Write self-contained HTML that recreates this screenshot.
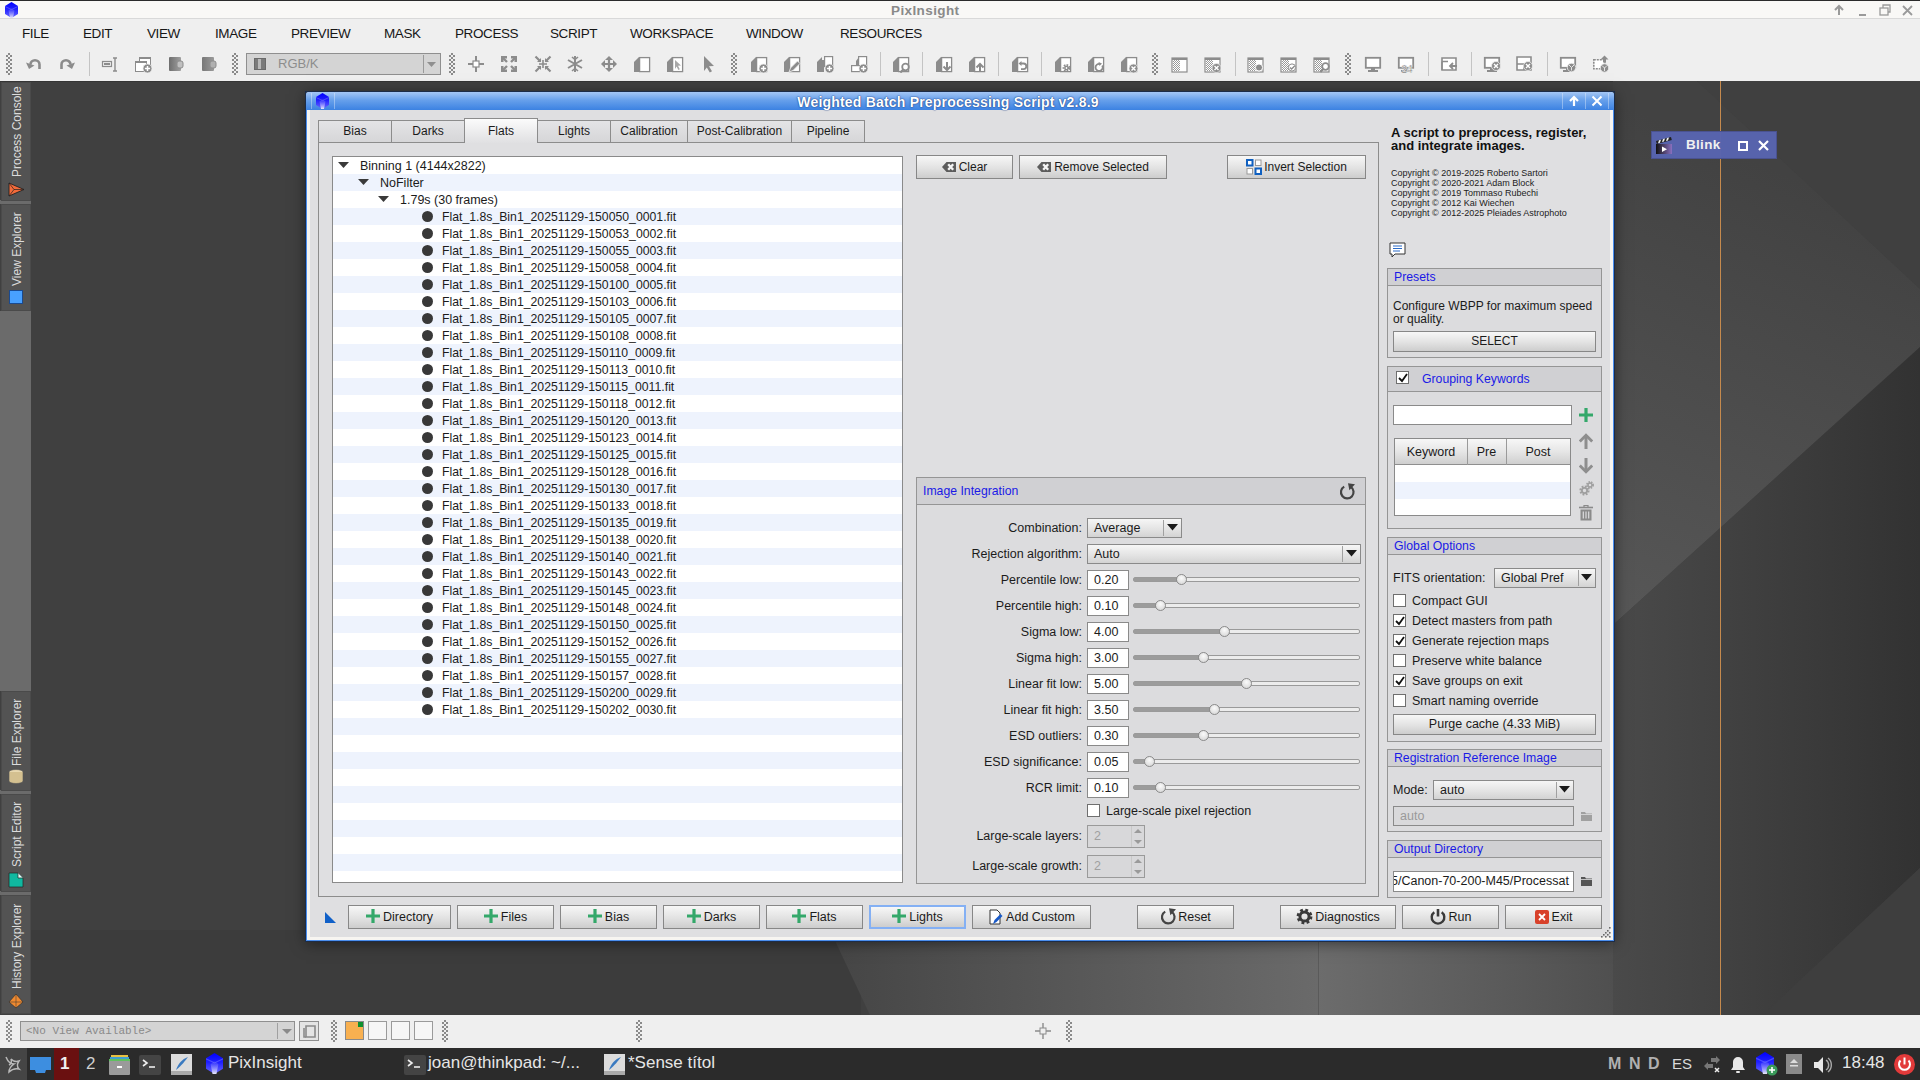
<!DOCTYPE html><html><head><meta charset="utf-8"><style>
*{box-sizing:border-box;margin:0;padding:0}
html,body{width:1920px;height:1080px;overflow:hidden;background:#3d3d3d}
body{position:relative;font-family:"Liberation Sans",sans-serif;font-size:12px;color:#1b1b1b}
div,span,svg{position:absolute}
.t{white-space:nowrap;line-height:14px}
.btn{border:1px solid #878787;background:linear-gradient(#f7f7f7,#e2e2e2 55%,#cdcdcd);text-align:center;line-height:21px;white-space:nowrap;color:#1b1b1b}
.btn span{position:static}
.grp{border:1px solid #959595;background:#dcdcde}
.gh{left:0;right:0;top:0;background:#d0d0d3;border-bottom:1px solid #959595}
.gt{color:#1a1ae6;white-space:nowrap;line-height:14px}
.cb{width:14px;height:14px;border:1px solid #6f6f6f;background:#fff}
.edit{background:#fff;border:1px solid #8a8a8a;line-height:18px;padding-left:6px;white-space:nowrap}
.combo{border:1px solid #8a8a8a;background:linear-gradient(#f6f6f6,#e4e4e4 55%,#d3d3d3);line-height:18px;padding-left:6px;white-space:nowrap}
.tb{background:#efefef}
</style></head><body><div style="left:0px;top:0px;width:1920px;height:1px;background:#2b2b2b"></div>
<div style="left:0px;top:1px;width:1920px;height:17px;background:#f9f8f6"></div>
<div style="left:0px;top:18px;width:1920px;height:1px;background:#d9d9d9"></div>
<div class="t" style="left:891px;top:4px;font-size:13.5px;font-weight:bold;color:#8a8a8a;line-height:14px;letter-spacing:0.4px">PixInsight</div>
<svg style="left:5px;top:2px" width="13" height="16" viewBox="0 0 13 16"><defs><linearGradient id="pl1" x1="0" y1="0" x2="0" y2="1"><stop offset="0" stop-color="#0000ff"/><stop offset="0.45" stop-color="#2020ff"/><stop offset="1" stop-color="#6a6aff"/></linearGradient><linearGradient id="pw1" x1="0" y1="0" x2="0" y2="1"><stop offset="0" stop-color="#5a5aff" stop-opacity="0.2"/><stop offset="1" stop-color="#e8e8fa"/></linearGradient></defs><polygon points="6.5,0 13,4 13,12 6.5,16 0,12 0,4" fill="url(#pl1)"/><polygon points="6.5,6 9.5,8.5 8,16 5,16 3.5,8.5" fill="url(#pw1)"/><polygon points="0,4 6.5,7 6.5,8 0,5" fill="#8080ff" opacity="0.5"/><polygon points="13,4 6.5,7 6.5,8 13,5" fill="#8080ff" opacity="0.5"/></svg>
<svg style="left:1830px;top:3px" width="90" height="14" viewBox="0 0 90 14"><path d="M9 12V3M5 7l4-4 4 4" stroke="#9a9a9a" stroke-width="2" fill="none"/><rect x="29" y="11" width="7" height="2" fill="#9a9a9a"/><rect x="50" y="5" width="8" height="7" fill="none" stroke="#9a9a9a" stroke-width="1.3"/><path d="M53 5V2h7v7h-2" fill="none" stroke="#9a9a9a" stroke-width="1.3"/><path d="M73 3l9 9M82 3l-9 9" stroke="#9a9a9a" stroke-width="1.8"/></svg>
<div style="left:0px;top:19px;width:1920px;height:62px;background:#efefef"></div>
<div class="t" style="left:22px;top:27px;font-size:13.5px;line-height:14px;color:#161616;letter-spacing:-0.4px">FILE</div>
<div class="t" style="left:83px;top:27px;font-size:13.5px;line-height:14px;color:#161616;letter-spacing:-0.4px">EDIT</div>
<div class="t" style="left:147px;top:27px;font-size:13.5px;line-height:14px;color:#161616;letter-spacing:-0.4px">VIEW</div>
<div class="t" style="left:215px;top:27px;font-size:13.5px;line-height:14px;color:#161616;letter-spacing:-0.4px">IMAGE</div>
<div class="t" style="left:291px;top:27px;font-size:13.5px;line-height:14px;color:#161616;letter-spacing:-0.4px">PREVIEW</div>
<div class="t" style="left:384px;top:27px;font-size:13.5px;line-height:14px;color:#161616;letter-spacing:-0.4px">MASK</div>
<div class="t" style="left:455px;top:27px;font-size:13.5px;line-height:14px;color:#161616;letter-spacing:-0.4px">PROCESS</div>
<div class="t" style="left:550px;top:27px;font-size:13.5px;line-height:14px;color:#161616;letter-spacing:-0.4px">SCRIPT</div>
<div class="t" style="left:630px;top:27px;font-size:13.5px;line-height:14px;color:#161616;letter-spacing:-0.4px">WORKSPACE</div>
<div class="t" style="left:746px;top:27px;font-size:13.5px;line-height:14px;color:#161616;letter-spacing:-0.4px">WINDOW</div>
<div class="t" style="left:840px;top:27px;font-size:13.5px;line-height:14px;color:#161616;letter-spacing:-0.4px">RESOURCES</div>
<div style="left:6px;top:53px;width:6px;height:22px;background:repeating-conic-gradient(#8a8a8a 0 25%,transparent 0 50%) 0 0/4px 4px"></div>
<div style="left:232px;top:53px;width:6px;height:22px;background:repeating-conic-gradient(#8a8a8a 0 25%,transparent 0 50%) 0 0/4px 4px"></div>
<div style="left:449px;top:53px;width:6px;height:22px;background:repeating-conic-gradient(#8a8a8a 0 25%,transparent 0 50%) 0 0/4px 4px"></div>
<div style="left:731px;top:53px;width:6px;height:22px;background:repeating-conic-gradient(#8a8a8a 0 25%,transparent 0 50%) 0 0/4px 4px"></div>
<div style="left:1152px;top:53px;width:6px;height:22px;background:repeating-conic-gradient(#8a8a8a 0 25%,transparent 0 50%) 0 0/4px 4px"></div>
<div style="left:1345px;top:53px;width:6px;height:22px;background:repeating-conic-gradient(#8a8a8a 0 25%,transparent 0 50%) 0 0/4px 4px"></div>
<div style="left:89px;top:52px;width:1px;height:24px;background:#c4c4c4"></div>
<div style="left:880px;top:52px;width:1px;height:24px;background:#c4c4c4"></div>
<div style="left:922px;top:52px;width:1px;height:24px;background:#c4c4c4"></div>
<div style="left:998px;top:52px;width:1px;height:24px;background:#c4c4c4"></div>
<div style="left:1041px;top:52px;width:1px;height:24px;background:#c4c4c4"></div>
<div style="left:1235px;top:52px;width:1px;height:24px;background:#c4c4c4"></div>
<div style="left:1428px;top:52px;width:1px;height:24px;background:#c4c4c4"></div>
<div style="left:1471px;top:52px;width:1px;height:24px;background:#c4c4c4"></div>
<div style="left:1547px;top:52px;width:1px;height:24px;background:#c4c4c4"></div>
<svg style="left:25px;top:55px" width="18" height="18" viewBox="0 0 18 18"><path d="M5.5 9.5a4.5 4.2 0 0 1 9 0V14" fill="none" stroke="#8c8c8c" stroke-width="2.6"/><path d="M1 7.5l3 6.5 5.5-3.5z" fill="#8c8c8c"/></svg>
<svg style="left:58px;top:55px" width="18" height="18" viewBox="0 0 18 18"><path d="M12.5 9.5a4.5 4.2 0 0 0-9 0V14" fill="none" stroke="#8c8c8c" stroke-width="2.6"/><path d="M17 7.5l-3 6.5-5.5-3.5z" fill="#8c8c8c"/></svg>
<svg style="left:101px;top:55px" width="18" height="18" viewBox="0 0 18 18"><rect x="1.5" y="6.5" width="9" height="5" fill="none" stroke="#8c8c8c" stroke-width="1.2"/><rect x="3" y="8" width="6" height="2" fill="#8c8c8c"/><path d="M12 3h4M14 3v13M12 16h4" stroke="#8c8c8c" stroke-width="1.4" fill="none"/></svg>
<svg style="left:134px;top:55px" width="18" height="18" viewBox="0 0 18 18"><rect x="5.5" y="2.5" width="11" height="9" fill="#fff" stroke="#8c8c8c"/><rect x="5.5" y="2" width="11" height="2" fill="#8c8c8c"/><rect x="1.5" y="6.5" width="11" height="10" fill="#fff" stroke="#8c8c8c"/><rect x="1.5" y="6" width="11" height="2" fill="#8c8c8c"/><circle cx="13.5" cy="13.5" r="4.5" fill="#8c8c8c" stroke="#efefef" stroke-width="0.8"/><path d="M13.5 10.9v5.2M10.9 13.5h5.2" stroke="#fff" stroke-width="1.5"/></svg>
<svg style="left:167px;top:55px" width="18" height="18" viewBox="0 0 18 18"><defs><linearGradient id="g176" x1="0" x2="1"><stop offset="0" stop-color="#6e6e6e"/><stop offset="1" stop-color="#a0a0a0"/></linearGradient></defs><rect x="2" y="2" width="12" height="14" rx="1" fill="url(#g176)"/><rect x="10" y="6" width="6" height="7" rx="2" fill="#c0c0c0" stroke="#8c8c8c"/></svg>
<svg style="left:200px;top:55px" width="18" height="18" viewBox="0 0 18 18"><defs><linearGradient id="g209" x1="0" x2="1"><stop offset="0" stop-color="#777"/><stop offset="1" stop-color="#9a9a9a"/></linearGradient></defs><rect x="2" y="2" width="12" height="14" rx="1" fill="url(#g209)"/><rect x="10" y="6" width="6" height="7" rx="2" fill="#b0b0b0" stroke="#8c8c8c"/></svg>
<svg style="left:467px;top:55px" width="18" height="18" viewBox="0 0 18 18"><path d="M9 1v16M1 9h16" stroke="#8c8c8c" stroke-width="2"/><rect x="6" y="6" width="6" height="6" fill="#fff" stroke="#8c8c8c" stroke-width="1.2"/></svg>
<svg style="left:500px;top:55px" width="18" height="18" viewBox="0 0 18 18"><path d="M3 3l4 4M15 3l-4 4M3 15l4-4M15 15l-4-4" stroke="#8c8c8c" stroke-width="2.4"/><path d="M1 1h6v2.5H3.5V7H1zM17 1v6h-2.5V3.5H11V1zM1 17v-6h2.5v3.5H7V17zM17 17h-6v-2.5h3.5V11H17z" fill="#8c8c8c"/></svg>
<svg style="left:534px;top:55px" width="18" height="18" viewBox="0 0 18 18"><path d="M1.5 1.5l5 5M16.5 1.5l-5 5M1.5 16.5l5-5M16.5 16.5l-5-5" stroke="#8c8c8c" stroke-width="2.2"/><path d="M7 3v4H3zM11 3v4h4zM7 15v-4H3zM11 15v-4h4z" fill="#8c8c8c"/><path d="M9 5v8M5 9h8" stroke="#8c8c8c" stroke-width="1.6"/></svg>
<svg style="left:566px;top:55px" width="18" height="18" viewBox="0 0 18 18"><path d="M9 1v16M2 5l14 8M2 13l14-8" stroke="#8c8c8c" stroke-width="2"/><path d="M6 2l3 2.5L12 2M6 16l3-2.5 3 2.5" stroke="#8c8c8c" stroke-width="1.6" fill="none"/></svg>
<svg style="left:600px;top:55px" width="18" height="18" viewBox="0 0 18 18"><path d="M9 1l4 4H5zM9 17l-4-4h8zM1 9l4-4v8zM17 9l-4 4V5z" fill="#8c8c8c"/><path d="M9 4v10M4 9h10" stroke="#8c8c8c" stroke-width="2.2"/></svg>
<svg style="left:633px;top:55px" width="18" height="18" viewBox="0 0 18 18"><path d="M1 7L6 2v15H1z" fill="#8c8c8c"/><rect x="6.6" y="2.6" width="10" height="14" fill="#fff" stroke="#8c8c8c" stroke-width="1.3"/></svg>
<svg style="left:666px;top:55px" width="18" height="18" viewBox="0 0 18 18"><path d="M1 7L6 2v15H1z" fill="#8c8c8c"/><rect x="6.6" y="2.6" width="10" height="14" fill="#fff" stroke="#8c8c8c" stroke-width="1.3"/><path d="M9 5l6 5.5-3 .3 1.8 3.4-1.4.8-1.8-3.4L9 14z" fill="#a8a8a8"/></svg>
<svg style="left:699px;top:55px" width="18" height="18" viewBox="0 0 18 18"><path d="M5 1l10 10-5 .3 3 5-2.2 1.3-3-5L5 16z" fill="#8c8c8c"/></svg>
<svg style="left:750px;top:55px" width="18" height="18" viewBox="0 0 18 18"><path d="M1 7L6 2v15H1z" fill="#8c8c8c"/><rect x="6.6" y="2.6" width="10" height="14" fill="#fff" stroke="#8c8c8c" stroke-width="1.3"/><circle cx="13.5" cy="13.5" r="4.5" fill="#8c8c8c" stroke="#efefef" stroke-width="0.8"/><path d="M13.5 10.9v5.2M10.9 13.5h5.2" stroke="#fff" stroke-width="1.5"/></svg>
<svg style="left:783px;top:55px" width="18" height="18" viewBox="0 0 18 18"><path d="M1 7L6 2v15H1z" fill="#8c8c8c"/><rect x="6.6" y="2.6" width="10" height="14" fill="#fff" stroke="#8c8c8c" stroke-width="1.3"/><path d="M6 17l1.5-4 7-7 2.5 2.5-7 7z" fill="#8c8c8c" stroke="#efefef" stroke-width="0.8"/></svg>
<svg style="left:816px;top:55px" width="18" height="18" viewBox="0 0 18 18"><path d="M1 7L6 2v15H1z" fill="#8c8c8c"/><rect x="8.6" y="1.6" width="8" height="10" fill="#fff" stroke="#8c8c8c" stroke-width="1.2"/><rect x="6" y="5" width="2" height="12" fill="#8c8c8c"/><circle cx="13.5" cy="13.5" r="4.5" fill="#8c8c8c" stroke="#efefef" stroke-width="0.8"/><path d="M13.5 10.9v5.2M10.9 13.5h5.2" stroke="#fff" stroke-width="1.5"/></svg>
<svg style="left:850px;top:55px" width="18" height="18" viewBox="0 0 18 18"><rect x="8.6" y="1.6" width="8" height="10" fill="#fff" stroke="#8c8c8c" stroke-width="1.2"/><path d="M6 6L9 2v6H6z" fill="#8c8c8c"/><rect x="1.6" y="10.6" width="8" height="6" fill="#fff" stroke="#8c8c8c" stroke-width="1.2"/><rect x="6" y="7" width="3" height="4" fill="#8c8c8c"/><circle cx="13.5" cy="13.5" r="4.5" fill="#8c8c8c" stroke="#efefef" stroke-width="0.8"/><path d="M13.5 10.9v5.2M10.9 13.5h5.2" stroke="#fff" stroke-width="1.5"/></svg>
<svg style="left:892px;top:55px" width="18" height="18" viewBox="0 0 18 18"><path d="M1 7L6 2v15H1z" fill="#8c8c8c"/><rect x="6.6" y="2.6" width="10" height="14" fill="#fff" stroke="#8c8c8c" stroke-width="1.3"/><circle cx="13.5" cy="12.0" r="3.3" fill="#fff" stroke="#8c8c8c" stroke-width="1.8"/><path d="M11.3 14.5l-3 3" stroke="#8c8c8c" stroke-width="2.2"/></svg>
<svg style="left:935px;top:55px" width="18" height="18" viewBox="0 0 18 18"><path d="M1 7L6 2v15H1z" fill="#8c8c8c"/><rect x="6.6" y="2.6" width="10" height="14" fill="#fff" stroke="#8c8c8c" stroke-width="1.3"/><path d="M12 7v8M8.5 11.5L12 15l3.5-3.5" stroke="#8c8c8c" stroke-width="2" fill="none"/></svg>
<svg style="left:968px;top:55px" width="18" height="18" viewBox="0 0 18 18"><path d="M1 7L6 2v15H1z" fill="#8c8c8c"/><rect x="6.6" y="2.6" width="10" height="14" fill="#fff" stroke="#8c8c8c" stroke-width="1.3"/><path d="M12 17V9M8.5 12.5L12 9l3.5 3.5" stroke="#8c8c8c" stroke-width="2" fill="none"/></svg>
<svg style="left:1011px;top:55px" width="18" height="18" viewBox="0 0 18 18"><path d="M1 7L6 2v15H1z" fill="#8c8c8c"/><rect x="6.6" y="2.6" width="10" height="14" fill="#fff" stroke="#8c8c8c" stroke-width="1.3"/><path d="M10 8.5h2.5a2.8 2.8 0 0 1 0 5.6H10" stroke="#8c8c8c" stroke-width="1.8" fill="none"/><path d="M7.5 8.5l3-2.6v5.2z" fill="#8c8c8c"/></svg>
<svg style="left:1054px;top:55px" width="18" height="18" viewBox="0 0 18 18"><path d="M1 7L6 2v15H1z" fill="#8c8c8c"/><rect x="6.6" y="2.6" width="10" height="14" fill="#fff" stroke="#8c8c8c" stroke-width="1.3"/><circle cx="12.5" cy="13" r="2.6" fill="none" stroke="#8c8c8c" stroke-width="2.6" stroke-dasharray="1.4 1"/><circle cx="12.5" cy="13" r="1.6" fill="none" stroke="#8c8c8c" stroke-width="1.4"/></svg>
<svg style="left:1087px;top:55px" width="18" height="18" viewBox="0 0 18 18"><path d="M1 7L6 2v15H1z" fill="#8c8c8c"/><rect x="6.6" y="2.6" width="10" height="14" fill="#fff" stroke="#8c8c8c" stroke-width="1.3"/><path d="M15.2 10.5a3.6 3.6 0 1 1-2.2-1.6" stroke="#8c8c8c" stroke-width="1.8" fill="none"/><path d="M11.5 7l3.5 1.5-2.5 2.5z" fill="#8c8c8c"/></svg>
<svg style="left:1120px;top:55px" width="18" height="18" viewBox="0 0 18 18"><path d="M1 7L6 2v15H1z" fill="#8c8c8c"/><rect x="6.6" y="2.6" width="10" height="14" fill="#fff" stroke="#8c8c8c" stroke-width="1.3"/><circle cx="13.5" cy="13.5" r="4.5" fill="#8c8c8c" stroke="#efefef" stroke-width="0.8"/><path d="M11.5 11.5l4 4M15.5 11.5l-4 4" stroke="#fff" stroke-width="1.4"/></svg>
<svg style="left:1171px;top:55px" width="18" height="18" viewBox="0 0 18 18"><defs><pattern id="ck" width="2" height="2" patternUnits="userSpaceOnUse"><rect width="2" height="2" fill="#fff"/><rect width="1" height="1" fill="#999"/><rect x="1" y="1" width="1" height="1" fill="#999"/></pattern></defs><rect x="1" y="3" width="15" height="14" fill="#fff" stroke="#8c8c8c" stroke-width="1.2"/><rect x="1" y="3" width="15" height="2" fill="#8c8c8c"/><rect x="2" y="5" width="7" height="11" fill="url(#ck)"/></svg>
<svg style="left:1204px;top:55px" width="18" height="18" viewBox="0 0 18 18"><defs><pattern id="ck" width="2" height="2" patternUnits="userSpaceOnUse"><rect width="2" height="2" fill="#fff"/><rect width="1" height="1" fill="#999"/><rect x="1" y="1" width="1" height="1" fill="#999"/></pattern></defs><rect x="1" y="3" width="15" height="14" fill="#fff" stroke="#8c8c8c" stroke-width="1.2"/><rect x="1" y="3" width="15" height="2" fill="#8c8c8c"/><rect x="2" y="5" width="7" height="11" fill="url(#ck)"/><circle cx="12.5" cy="13" r="4.5" fill="#8c8c8c" stroke="#efefef" stroke-width="0.8"/><path d="M10.5 11l4 4M14.5 11l-4 4" stroke="#fff" stroke-width="1.4"/></svg>
<svg style="left:1247px;top:55px" width="18" height="18" viewBox="0 0 18 18"><defs><pattern id="ck" width="2" height="2" patternUnits="userSpaceOnUse"><rect width="2" height="2" fill="#fff"/><rect width="1" height="1" fill="#999"/><rect x="1" y="1" width="1" height="1" fill="#999"/></pattern></defs><rect x="1" y="3" width="15" height="14" fill="#fff" stroke="#8c8c8c" stroke-width="1.2"/><rect x="1" y="3" width="15" height="2" fill="#8c8c8c"/><rect x="2" y="5" width="7" height="11" fill="url(#ck)"/><circle cx="12" cy="12.5" r="3.6" fill="#8c8c8c" stroke="#fff" stroke-width="1"/></svg>
<svg style="left:1280px;top:55px" width="18" height="18" viewBox="0 0 18 18"><defs><pattern id="ck" width="2" height="2" patternUnits="userSpaceOnUse"><rect width="2" height="2" fill="#fff"/><rect width="1" height="1" fill="#999"/><rect x="1" y="1" width="1" height="1" fill="#999"/></pattern></defs><rect x="1" y="3" width="15" height="14" fill="#fff" stroke="#8c8c8c" stroke-width="1.2"/><rect x="1" y="3" width="15" height="2" fill="#8c8c8c"/><rect x="2" y="5" width="7" height="11" fill="url(#ck)"/><circle cx="12" cy="12.5" r="3.6" fill="#fff" stroke="#8c8c8c" stroke-width="1"/><path d="M10 12.5l1.6 1.6 3-3" stroke="#8c8c8c" stroke-width="1.4" fill="none"/></svg>
<svg style="left:1313px;top:55px" width="18" height="18" viewBox="0 0 18 18"><defs><pattern id="ck" width="2" height="2" patternUnits="userSpaceOnUse"><rect width="2" height="2" fill="#fff"/><rect width="1" height="1" fill="#999"/><rect x="1" y="1" width="1" height="1" fill="#999"/></pattern></defs><rect x="1" y="3" width="15" height="14" fill="#fff" stroke="#8c8c8c" stroke-width="1.2"/><rect x="1" y="3" width="15" height="2" fill="#8c8c8c"/><rect x="2" y="5" width="7" height="11" fill="url(#ck)"/><circle cx="12.5" cy="11.5" r="3.3" fill="#fff" stroke="#8c8c8c" stroke-width="1.8"/><path d="M10.3 14l-3 3" stroke="#8c8c8c" stroke-width="2.2"/></svg>
<svg style="left:1364px;top:55px" width="18" height="18" viewBox="0 0 18 18"><rect x="1.8" y="2.8" width="14.4" height="10" fill="#fff" stroke="#8c8c8c" stroke-width="1.8"/><rect x="7" y="13" width="4" height="2" fill="#8c8c8c"/><rect x="4" y="15" width="10" height="2" fill="#8c8c8c"/></svg>
<svg style="left:1397px;top:55px" width="18" height="18" viewBox="0 0 18 18"><rect x="1.8" y="2.8" width="14.4" height="10" fill="#fff" stroke="#8c8c8c" stroke-width="1.8"/><rect x="7" y="13" width="4" height="2" fill="#8c8c8c"/><rect x="4" y="15" width="10" height="2" fill="#8c8c8c"/><text x="10" y="17.5" font-size="10" font-weight="bold" text-anchor="middle" fill="#777" stroke="#efefef" stroke-width="0.6" font-family="Liberation Sans">24</text></svg>
<svg style="left:1440px;top:55px" width="18" height="18" viewBox="0 0 18 18"><path d="M2 3h14v12H2z" fill="#fff" stroke="#8c8c8c" stroke-width="1.6"/><path d="M2 6.5h6M2 6.5v8.5" stroke="#8c8c8c" stroke-width="1.4"/><path d="M17 11h-7M13 8l-3 3 3 3" stroke="#8c8c8c" stroke-width="1.8" fill="none"/></svg>
<svg style="left:1483px;top:55px" width="18" height="18" viewBox="0 0 18 18"><rect x="1.8" y="2.8" width="14.4" height="10" fill="#fff" stroke="#8c8c8c" stroke-width="1.8"/><rect x="7" y="13" width="4" height="2" fill="#8c8c8c"/><rect x="4" y="15" width="10" height="2" fill="#8c8c8c"/><circle cx="13" cy="11" r="4.5" fill="#8c8c8c" stroke="#efefef" stroke-width="0.8"/><path d="M11 9l4 4M15 9l-4 4" stroke="#fff" stroke-width="1.4"/></svg>
<svg style="left:1515px;top:55px" width="18" height="18" viewBox="0 0 18 18"><path d="M2 2h14v13H2z" fill="#fff" stroke="#8c8c8c" stroke-width="1.6"/><path d="M2 9h7v6" stroke="#8c8c8c" stroke-width="1.6" fill="none"/><circle cx="13" cy="11" r="4.5" fill="#8c8c8c" stroke="#efefef" stroke-width="0.8"/><path d="M11 9l4 4M15 9l-4 4" stroke="#fff" stroke-width="1.4"/></svg>
<svg style="left:1559px;top:55px" width="18" height="18" viewBox="0 0 18 18"><rect x="1.8" y="2.8" width="14.4" height="10" fill="#fff" stroke="#8c8c8c" stroke-width="1.8"/><rect x="7" y="13" width="4" height="2" fill="#8c8c8c"/><rect x="4" y="15" width="10" height="2" fill="#8c8c8c"/><circle cx="12.5" cy="12.5" r="4.2" fill="#8c8c8c" stroke="#efefef" stroke-width="0.8"/><path d="M12.5 12.5l-2.5-2.5M12.5 12.5l2.5-2.5M12.5 12.5v3" stroke="#efefef" stroke-width="0.9"/></svg>
<svg style="left:1592px;top:55px" width="18" height="18" viewBox="0 0 18 18"><rect x="1.8" y="4.8" width="11" height="9" fill="#fff" stroke="#8c8c8c" stroke-width="1.6" stroke-dasharray="2 1"/><path d="M12.5 0.5l4 4h-2.5v3h-3v-3H8.5z" fill="#8c8c8c"/><circle cx="12.5" cy="13" r="4.2" fill="#8c8c8c" stroke="#efefef" stroke-width="0.8"/><path d="M12.5 13l-2.5-2.5M12.5 13l2.5-2.5M12.5 13v3" stroke="#efefef" stroke-width="0.9"/></svg>
<div style="left:246px;top:53px;width:195px;height:22px;background:#d4d4d4;border:1px solid #8f8f8f"></div>
<div style="left:254px;top:58px;width:12px;height:12px;border:1px solid #6a6a6a;background:linear-gradient(90deg,#7a7a7a 0 30%,#b8b8b8 30% 60%,#7a7a7a 60%)"></div>
<div class="t" style="left:278px;top:56px;font-size:13px;color:#8d8d8d;line-height:16px">RGB/K</div>
<div style="left:423px;top:55px;width:1px;height:18px;background:#9a9a9a"></div>
<svg style="left:427px;top:60px" width="10" height="8"><path d="M0 2h9l-4.5 5z" fill="#8f8f8f"/></svg>
<svg style="left:0;top:81px" width="1920" height="934" viewBox="0 81 1920 934"><defs><linearGradient id="bgR" x1="0" y1="0" x2="1" y2="0"><stop offset="0" stop-color="#4a4a4a"/><stop offset="1" stop-color="#323232"/></linearGradient><linearGradient id="bgL" gradientUnits="userSpaceOnUse" x1="1800" y1="180" x2="1613" y2="620"><stop offset="0" stop-color="#424242"/><stop offset="1" stop-color="#575757"/></linearGradient><linearGradient id="bgT" x1="0" y1="0" x2="0" y2="1"><stop offset="0" stop-color="#383838"/><stop offset="1" stop-color="#484848"/></linearGradient><linearGradient id="bgB" gradientUnits="userSpaceOnUse" x1="830" y1="0" x2="1318" y2="0"><stop offset="0" stop-color="#454545"/><stop offset="1" stop-color="#6a6a6a"/></linearGradient><linearGradient id="bgC" gradientUnits="userSpaceOnUse" x1="1318" y1="0" x2="1720" y2="0"><stop offset="0" stop-color="#6c6c6c"/><stop offset="1" stop-color="#454545"/></linearGradient></defs><rect x="0" y="80" width="1920" height="935" fill="#404040"/><rect x="0" y="81" width="1920" height="1" fill="#353535"/><polygon points="1613,80 1696,80 1920,289 1920,347 1613,625" fill="url(#bgL)"/><polygon points="1696,80 1920,80 1920,289" fill="#404040"/><polygon points="1613,625 1920,347 1920,868 1763,1015 1613,1015" fill="url(#bgR)"/><polygon points="1920,868 1763,1015 1920,1015" fill="#3e3e3e"/><rect x="31" y="930" width="830" height="85" fill="#3c3c3c"/><polygon points="830,930 1318,930 1318,1015 870,1015" fill="url(#bgB)"/><polygon points="1318,930 1613,930 1613,1015 1318,1015" fill="url(#bgC)"/><rect x="1318" y="930" width="1" height="85" fill="#5a5a5a"/><rect x="1720" y="80" width="1" height="935" fill="#c58a4e"/></svg>
<div style="left:0;top:311px;width:31px;height:380px;background:#6b6b6b"></div>
<div style="left:0;top:200px;width:31px;height:4px;background:#6b6b6b"></div>
<div style="left:0;top:790px;width:31px;height:4px;background:#6b6b6b"></div>
<div style="left:0;top:891px;width:31px;height:4px;background:#6b6b6b"></div>
<div style="left:1px;top:82px;width:30px;height:119px;background:#535353;border:1px solid #4a4a4a"><div class="t" style="left:8px;top:94px;transform-origin:0 0;transform:rotate(-90deg);font-size:12px;color:#dcdcdc;line-height:14px">Process Console</div><svg style="left:6px;top:99px" width="17" height="15" viewBox="0 0 17 15"><path d="M1 1l15 6.5L1 14z" fill="#f26a3a" stroke="#222" stroke-width="0.9" stroke-linejoin="round"/><path d="M1 1L6 7.5 1 14M6 7.5h10" stroke="#222" stroke-width="0.7" fill="none"/></svg></div>
<div style="left:1px;top:204px;width:30px;height:107px;background:#535353;border:1px solid #4a4a4a"><div class="t" style="left:8px;top:81px;transform-origin:0 0;transform:rotate(-90deg);font-size:12px;color:#dcdcdc;line-height:14px">View Explorer</div><div style="left:7px;top:85px;width:14px;height:14px;background:#48a0ff;border:1px solid #1a4a90"></div></div>
<div style="left:1px;top:691px;width:30px;height:100px;background:#535353;border:1px solid #4a4a4a"><div class="t" style="left:8px;top:74px;transform-origin:0 0;transform:rotate(-90deg);font-size:12px;color:#dcdcdc;line-height:14px">File Explorer</div><svg style="left:6px;top:77px" width="16" height="15" viewBox="0 0 16 15"><ellipse cx="8" cy="3" rx="7" ry="2.5" fill="#e8d8b0" stroke="#555" stroke-width="0.6"/><path d="M1 3v9a7 2.5 0 0 0 14 0V3" fill="#d4c090" stroke="#555" stroke-width="0.6"/></svg></div>
<div style="left:1px;top:794px;width:30px;height:98px;background:#535353;border:1px solid #4a4a4a"><div class="t" style="left:8px;top:72px;transform-origin:0 0;transform:rotate(-90deg);font-size:12px;color:#dcdcdc;line-height:14px">Script Editor</div><svg style="left:6px;top:77px" width="16" height="16" viewBox="0 0 16 16"><path d="M1 1h9l5 5v9H1z" fill="#10b8a0" stroke="#222" stroke-width="0.7"/><path d="M10 1v5h5" fill="#e0fff8" stroke="#222" stroke-width="0.7"/></svg></div>
<div style="left:1px;top:895px;width:30px;height:119px;background:#535353;border:1px solid #4a4a4a"><div class="t" style="left:8px;top:93px;transform-origin:0 0;transform:rotate(-90deg);font-size:12px;color:#dcdcdc;line-height:14px">History Explorer</div><svg style="left:6px;top:97px" width="16" height="16" viewBox="0 0 16 16"><path d="M8 1l7 8-7 6-7-6z" fill="#f08a30" stroke="#333" stroke-width="0.7"/><path d="M8 1v14M1 9h14" stroke="#333" stroke-width="0.5"/></svg></div>
<div style="left:0;top:1015px;width:1920px;height:33px;background:#efefef"></div>
<div style="left:6px;top:1020px;width:6px;height:22px;background:repeating-conic-gradient(#8a8a8a 0 25%,transparent 0 50%) 0 0/4px 4px"></div>
<div style="left:20px;top:1021px;width:275px;height:20px;background:#d4d4d4;border:1px solid #8f8f8f"></div>
<div class="t" style="left:26px;top:1024px;font-family:'Liberation Mono',monospace;font-size:11px;color:#8a8a8a">&lt;No View Available&gt;</div>
<div style="left:277px;top:1023px;width:1px;height:16px;background:#a0a0a0"></div>
<svg style="left:281px;top:1028px" width="12" height="8"><path d="M1 1h10l-5 5z" fill="#8a8a8a"/></svg>
<div style="left:299px;top:1021px;width:20px;height:20px;border:1px solid #8f8f8f;background:#e4e4e4"></div>
<svg style="left:303px;top:1025px" width="13" height="13"><path d="M3 1h9v11H3z" fill="none" stroke="#8a8a8a" stroke-width="1.6"/><path d="M1 3v9h2" fill="none" stroke="#8a8a8a" stroke-width="1.6"/></svg>
<div style="left:331px;top:1020px;width:6px;height:22px;background:repeating-conic-gradient(#8a8a8a 0 25%,transparent 0 50%) 0 0/4px 4px"></div>
<div style="left:345px;top:1021px;width:19px;height:19px;background:#f8b050;border:1px solid #8a8a8a"></div>
<div style="left:358px;top:1022px;width:5px;height:5px;background:#109030"></div>
<div style="left:368px;top:1021px;width:19px;height:19px;background:#f6f6f6;border:1px solid #9a9a9a"></div>
<div style="left:391px;top:1021px;width:19px;height:19px;background:#f6f6f6;border:1px solid #9a9a9a"></div>
<div style="left:414px;top:1021px;width:19px;height:19px;background:#f6f6f6;border:1px solid #9a9a9a"></div>
<div style="left:442px;top:1020px;width:6px;height:22px;background:repeating-conic-gradient(#8a8a8a 0 25%,transparent 0 50%) 0 0/4px 4px"></div>
<div style="left:636px;top:1020px;width:6px;height:22px;background:repeating-conic-gradient(#8a8a8a 0 25%,transparent 0 50%) 0 0/4px 4px"></div>
<svg style="left:1035px;top:1023px" width="16" height="16" viewBox="0 0 16 16"><path d="M8 0v16M0 8h16" stroke="#8c8c8c" stroke-width="1.4"/><rect x="5" y="5" width="6" height="6" fill="#efefef" stroke="#8c8c8c"/></svg>
<div style="left:1066px;top:1020px;width:6px;height:22px;background:repeating-conic-gradient(#8a8a8a 0 25%,transparent 0 50%) 0 0/4px 4px"></div>
<div style="left:0;top:1048px;width:1920px;height:32px;background:#2b2b2b"></div>
<div style="left:0;top:1048px;width:27px;height:32px;background:#454545"></div>
<svg style="left:3px;top:1053px" width="22" height="22" viewBox="0 0 22 22"><path d="M3 4c2 5 4 7 8 7-3 2-5 4-5 8 3-3 6-4 10-3-2-2-2-5 0-8-3 1-6 0-8-2 1 3 0 5-2 6" fill="none" stroke="#b8b8b8" stroke-width="1.5"/></svg>
<svg style="left:30px;top:1055px" width="21" height="19" viewBox="0 0 21 19"><path d="M0 2h21v13H16l-1 3H6l-1-3H0z" fill="#3d8ee0"/></svg>
<div style="left:54px;top:1048px;width:25px;height:32px;background:#6a1010"></div>
<div class="t" style="left:60px;top:1054px;font-size:17px;font-weight:bold;color:#f0f0f0;line-height:20px">1</div>
<div class="t" style="left:86px;top:1054px;font-size:17px;color:#d0d0d0;line-height:20px">2</div>
<svg style="left:109px;top:1054px" width="21" height="21" viewBox="0 0 21 21"><rect x="2" y="1" width="17" height="3" fill="#e8c040"/><rect x="1" y="3" width="19" height="3" fill="#40a0d0"/><rect x="0" y="5" width="21" height="3" fill="#60c060"/><rect x="0" y="7" width="21" height="14" rx="1" fill="#9a9a9a"/><rect x="8" y="12" width="5" height="2" fill="#fff"/></svg>
<svg style="left:139px;top:1055px" width="22" height="20" viewBox="0 0 22 20"><rect x="0" y="0" width="22" height="20" rx="2" fill="#444"/><path d="M4 5l4 3-4 3" stroke="#eee" stroke-width="1.6" fill="none"/><path d="M10 12h6" stroke="#eee" stroke-width="1.6"/></svg>
<svg style="left:171px;top:1054px" width="21" height="21" viewBox="0 0 21 21"><rect x="0" y="0" width="21" height="21" fill="#dcdcdc"/><rect x="0" y="17" width="21" height="4" fill="#aaa"/><path d="M5 16c2-6 6-11 12-13-3 4-6 8-12 13z" fill="#3a7ac0"/></svg>
<svg style="left:206px;top:1053px" width="17" height="21" viewBox="0 0 13 16"><defs><linearGradient id="pl2" x1="0" y1="0" x2="0" y2="1"><stop offset="0" stop-color="#0000ff"/><stop offset="0.45" stop-color="#2020ff"/><stop offset="1" stop-color="#6a6aff"/></linearGradient><linearGradient id="pw2" x1="0" y1="0" x2="0" y2="1"><stop offset="0" stop-color="#5a5aff" stop-opacity="0.2"/><stop offset="1" stop-color="#e8e8fa"/></linearGradient></defs><polygon points="6.5,0 13,4 13,12 6.5,16 0,12 0,4" fill="url(#pl2)"/><polygon points="6.5,6 9.5,8.5 8,16 5,16 3.5,8.5" fill="url(#pw2)"/><polygon points="0,4 6.5,7 6.5,8 0,5" fill="#8080ff" opacity="0.5"/><polygon points="13,4 6.5,7 6.5,8 13,5" fill="#8080ff" opacity="0.5"/></svg>
<div class="t" style="left:228px;top:1052px;font-size:17px;color:#e6e6e6;line-height:22px">PixInsight</div>
<svg style="left:404px;top:1055px" width="22" height="20" viewBox="0 0 22 20"><rect x="0" y="0" width="22" height="20" rx="2" fill="#444"/><path d="M4 5l4 3-4 3" stroke="#eee" stroke-width="1.6" fill="none"/><path d="M10 12h6" stroke="#eee" stroke-width="1.6"/></svg>
<div class="t" style="left:428px;top:1052px;font-size:17px;color:#e6e6e6;line-height:22px">joan@thinkpad: ~/...</div>
<svg style="left:604px;top:1054px" width="21" height="21" viewBox="0 0 21 21"><rect x="0" y="0" width="21" height="21" fill="#dcdcdc"/><rect x="0" y="17" width="21" height="4" fill="#aaa"/><path d="M5 16c2-6 6-11 12-13-3 4-6 8-12 13z" fill="#3a7ac0"/></svg>
<div class="t" style="left:628px;top:1052px;font-size:17px;color:#e6e6e6;line-height:22px">*Sense títol</div>
<div class="t" style="left:1608px;top:1053px;font-size:16px;font-weight:bold;color:#b0b0b0;line-height:20px;top:1054px">M</div>
<div class="t" style="left:1629px;top:1053px;font-size:16px;font-weight:bold;color:#b0b0b0;line-height:20px;top:1054px">N</div>
<div class="t" style="left:1648px;top:1053px;font-size:16px;font-weight:bold;color:#b0b0b0;line-height:20px;top:1054px">D</div>
<div class="t" style="left:1672px;top:1054px;font-size:15px;color:#dadada;line-height:20px">ES</div>
<svg style="left:1703px;top:1056px" width="18" height="18" viewBox="0 0 18 18"><path d="M8 2h5V0l4 4-4 4V6H8zM10 12H5v2l-4-4 4-4v2h5z" fill="#777"/><path d="M12 12l4 4M16 12l-4 4" stroke="#eee" stroke-width="1.5"/></svg>
<svg style="left:1730px;top:1056px" width="16" height="18" viewBox="0 0 16 18"><path d="M8 1a5 5 0 0 1 5 5v5l2 3H1l2-3V6a5 5 0 0 1 5-5z" fill="#e8e8e8"/><rect x="6" y="15" width="4" height="2" rx="1" fill="#e8e8e8"/></svg>
<svg style="left:1756px;top:1052px" width="18" height="22" viewBox="0 0 13 16"><defs><linearGradient id="pl3" x1="0" y1="0" x2="0" y2="1"><stop offset="0" stop-color="#0000ff"/><stop offset="0.45" stop-color="#2020ff"/><stop offset="1" stop-color="#6a6aff"/></linearGradient><linearGradient id="pw3" x1="0" y1="0" x2="0" y2="1"><stop offset="0" stop-color="#5a5aff" stop-opacity="0.2"/><stop offset="1" stop-color="#e8e8fa"/></linearGradient></defs><polygon points="6.5,0 13,4 13,12 6.5,16 0,12 0,4" fill="url(#pl3)"/><polygon points="6.5,6 9.5,8.5 8,16 5,16 3.5,8.5" fill="url(#pw3)"/><polygon points="0,4 6.5,7 6.5,8 0,5" fill="#8080ff" opacity="0.5"/><polygon points="13,4 6.5,7 6.5,8 13,5" fill="#8080ff" opacity="0.5"/></svg>
<svg style="left:1766px;top:1064px" width="12" height="12"><circle cx="6" cy="6" r="5.5" fill="#3a9a5a"/><path d="M6 3v6M3 6h6" stroke="#fff" stroke-width="1.6"/></svg>
<svg style="left:1786px;top:1054px" width="16" height="20" viewBox="0 0 16 20"><rect width="16" height="20" fill="#8a8a8a"/><path d="M4 9l4-4 4 4z" fill="#ddd"/><rect x="4" y="11" width="8" height="1.5" fill="#ddd"/></svg>
<svg style="left:1813px;top:1056px" width="20" height="18" viewBox="0 0 20 18"><path d="M1 6h4l5-5v16l-5-5H1z" fill="#e8e8e8"/><path d="M13 4a6 6 0 0 1 0 10M15 2a9 9 0 0 1 0 14" stroke="#aaa" stroke-width="1.4" fill="none"/></svg>
<div class="t" style="left:1842px;top:1052px;font-size:17px;color:#e6e6e6;line-height:22px">18:48</div>
<svg style="left:1894px;top:1054px" width="21" height="21" viewBox="0 0 21 21"><circle cx="10.5" cy="10.5" r="10.5" fill="#e23a3a"/><path d="M6.5 6.5a5.5 5.5 0 1 0 8 0" stroke="#fff" stroke-width="2" fill="none"/><path d="M10.5 3.5v7" stroke="#fff" stroke-width="2"/></svg>
<div style="left:1651px;top:131px;width:126px;height:28px;background:rgba(88,100,176,0.97);border:1px solid #4a5290"></div>
<svg style="left:1655px;top:136px" width="19" height="19" viewBox="0 0 19 19"><defs><linearGradient id="clp" x1="0" x2="1"><stop offset="0" stop-color="#111"/><stop offset="1" stop-color="#8a70c0"/></linearGradient></defs><rect x="1" y="8" width="16" height="10" fill="url(#clp)"/><path d="M1 5l15-4 0.8 3L1.8 8z" fill="#222"/><path d="M4 4.2l2-0.5-1 3-2 .5zM8 3.1l2-.5-1 3-2 .5zM12 2l2-.5-1 3-2 .5z" fill="#eee"/><path d="M7 10.5l5 2.7-5 2.7z" fill="#fff"/></svg>
<div class="t" style="left:1686px;top:137px;font-size:13.5px;font-weight:bold;color:#f0f0f0;line-height:15px;letter-spacing:0.3px">Blink</div>
<div style="left:1738px;top:141px;width:10px;height:10px;border:2px solid #fff"></div>
<svg style="left:1758px;top:140px" width="11" height="11"><path d="M1 1l9 9M10 1l-9 9" stroke="#fff" stroke-width="2.2"/></svg>
<div style="left:306px;top:91px;width:1308px;height:850px;box-shadow:0 0 0 1px #1c2c48,0 2px 14px rgba(0,0,0,0.5);top:92px;height:849px"></div>
<div style="left:306px;top:92px;width:1308px;height:849px;background:#f7f5f1;border:1px solid #4a8eee;border-top:none;border-radius:3px 3px 0 0"></div>
<div style="left:306px;top:92px;width:1308px;height:18px;background:linear-gradient(#a4c6f4,#67a0eb 45%,#3c82e2);border-radius:3px 3px 0 0"></div>
<div style="left:310px;top:110px;width:1300px;height:827px;background:#dfdfe1"></div>
<div style="left:311px;top:93px;width:1px;height:16px;background:rgba(255,255,255,0.35)"></div>
<div style="left:334px;top:93px;width:1px;height:16px;background:rgba(255,255,255,0.35)"></div>
<div style="left:1562px;top:93px;width:1px;height:16px;background:rgba(255,255,255,0.35)"></div>
<div style="left:1585px;top:93px;width:1px;height:16px;background:rgba(255,255,255,0.35)"></div>
<div style="left:1608px;top:93px;width:1px;height:16px;background:rgba(255,255,255,0.35)"></div>
<svg style="left:316px;top:93px" width="13" height="16" viewBox="0 0 13 16"><defs><linearGradient id="pl4" x1="0" y1="0" x2="0" y2="1"><stop offset="0" stop-color="#0000ff"/><stop offset="0.45" stop-color="#2020ff"/><stop offset="1" stop-color="#6a6aff"/></linearGradient><linearGradient id="pw4" x1="0" y1="0" x2="0" y2="1"><stop offset="0" stop-color="#5a5aff" stop-opacity="0.2"/><stop offset="1" stop-color="#e8e8fa"/></linearGradient></defs><polygon points="6.5,0 13,4 13,12 6.5,16 0,12 0,4" fill="url(#pl4)"/><polygon points="6.5,6 9.5,8.5 8,16 5,16 3.5,8.5" fill="url(#pw4)"/><polygon points="0,4 6.5,7 6.5,8 0,5" fill="#8080ff" opacity="0.5"/><polygon points="13,4 6.5,7 6.5,8 13,5" fill="#8080ff" opacity="0.5"/></svg>
<div class="t" style="left:306px;top:94px;width:1284px;text-align:center;font-size:14px;font-weight:bold;color:#fff;letter-spacing:0.2px;line-height:16px;text-shadow:0 0 1.5px #1c3c80,0 0 1px #1c3c80">Weighted Batch Preprocessing Script v2.8.9</div>
<svg style="left:1568px;top:95px" width="12" height="12"><path d="M6 11V3M2 6l4-4 4 4" stroke="#fff" stroke-width="2.2" fill="none"/></svg>
<svg style="left:1591px;top:95px" width="12" height="12"><path d="M1.5 1.5l9 9M10.5 1.5l-9 9" stroke="#fff" stroke-width="2"/></svg>
<div style="left:318px;top:142px;width:1061px;height:755px;border:1px solid #8c8c8c;border-right:none;background:#dfdfe1"></div>
<div style="left:1378px;top:142px;width:1px;height:755px;background:#8c8c8c"></div>
<div style="left:318px;top:120px;width:74px;height:23px;border:1px solid #8c8c8c;background:linear-gradient(#e4e4e6,#d6d6d8);text-align:center;line-height:21px;font-size:12px">Bias</div>
<div style="left:391px;top:120px;width:74px;height:23px;border:1px solid #8c8c8c;background:linear-gradient(#e4e4e6,#d6d6d8);text-align:center;line-height:21px;font-size:12px">Darks</div>
<div style="left:464px;top:118px;width:74px;height:25px;border:1px solid #8c8c8c;border-bottom:none;background:linear-gradient(#fbfbfb,#e0e0e2);text-align:center;line-height:24px;font-size:12px">Flats</div>
<div style="left:537px;top:120px;width:74px;height:23px;border:1px solid #8c8c8c;background:linear-gradient(#e4e4e6,#d6d6d8);text-align:center;line-height:21px;font-size:12px">Lights</div>
<div style="left:610px;top:120px;width:78px;height:23px;border:1px solid #8c8c8c;background:linear-gradient(#e4e4e6,#d6d6d8);text-align:center;line-height:21px;font-size:12px">Calibration</div>
<div style="left:687px;top:120px;width:105px;height:23px;border:1px solid #8c8c8c;background:linear-gradient(#e4e4e6,#d6d6d8);text-align:center;line-height:21px;font-size:12px">Post-Calibration</div>
<div style="left:791px;top:120px;width:74px;height:23px;border:1px solid #8c8c8c;background:linear-gradient(#e4e4e6,#d6d6d8);text-align:center;line-height:21px;font-size:12px">Pipeline</div>
<div style="left:332px;top:156px;width:571px;height:727px;background:#fff;border:1px solid #8a8a8a"></div>
<div style="left:333px;top:174px;width:569px;height:17px;background:#eef3fd"></div>
<div style="left:333px;top:208px;width:569px;height:17px;background:#eef3fd"></div>
<div style="left:333px;top:242px;width:569px;height:17px;background:#eef3fd"></div>
<div style="left:333px;top:276px;width:569px;height:17px;background:#eef3fd"></div>
<div style="left:333px;top:310px;width:569px;height:17px;background:#eef3fd"></div>
<div style="left:333px;top:344px;width:569px;height:17px;background:#eef3fd"></div>
<div style="left:333px;top:378px;width:569px;height:17px;background:#eef3fd"></div>
<div style="left:333px;top:412px;width:569px;height:17px;background:#eef3fd"></div>
<div style="left:333px;top:446px;width:569px;height:17px;background:#eef3fd"></div>
<div style="left:333px;top:480px;width:569px;height:17px;background:#eef3fd"></div>
<div style="left:333px;top:514px;width:569px;height:17px;background:#eef3fd"></div>
<div style="left:333px;top:548px;width:569px;height:17px;background:#eef3fd"></div>
<div style="left:333px;top:582px;width:569px;height:17px;background:#eef3fd"></div>
<div style="left:333px;top:616px;width:569px;height:17px;background:#eef3fd"></div>
<div style="left:333px;top:650px;width:569px;height:17px;background:#eef3fd"></div>
<div style="left:333px;top:684px;width:569px;height:17px;background:#eef3fd"></div>
<div style="left:333px;top:718px;width:569px;height:17px;background:#eef3fd"></div>
<div style="left:333px;top:752px;width:569px;height:17px;background:#eef3fd"></div>
<div style="left:333px;top:786px;width:569px;height:17px;background:#eef3fd"></div>
<div style="left:333px;top:820px;width:569px;height:17px;background:#eef3fd"></div>
<div style="left:333px;top:854px;width:569px;height:17px;background:#eef3fd"></div>
<svg style="left:338px;top:161px" width="12" height="8"><path d="M0 1h11l-5.5 6z" fill="#3a3a3a"/></svg>
<div class="t" style="left:360px;top:159px;font-size:12.5px">Binning 1 (4144x2822)</div>
<svg style="left:358px;top:178px" width="12" height="8"><path d="M0 1h11l-5.5 6z" fill="#3a3a3a"/></svg>
<div class="t" style="left:380px;top:176px;font-size:12.5px">NoFilter</div>
<svg style="left:378px;top:195px" width="12" height="8"><path d="M0 1h11l-5.5 6z" fill="#3a3a3a"/></svg>
<div class="t" style="left:400px;top:193px;font-size:12.5px">1.79s (30 frames)</div>
<div style="left:422px;top:211px;width:11px;height:11px;border-radius:50%;background:#383838"></div>
<div class="t" style="left:442px;top:210px;font-size:12.25px">Flat_1.8s_Bin1_20251129-150050_0001.fit</div>
<div style="left:422px;top:228px;width:11px;height:11px;border-radius:50%;background:#383838"></div>
<div class="t" style="left:442px;top:227px;font-size:12.25px">Flat_1.8s_Bin1_20251129-150053_0002.fit</div>
<div style="left:422px;top:245px;width:11px;height:11px;border-radius:50%;background:#383838"></div>
<div class="t" style="left:442px;top:244px;font-size:12.25px">Flat_1.8s_Bin1_20251129-150055_0003.fit</div>
<div style="left:422px;top:262px;width:11px;height:11px;border-radius:50%;background:#383838"></div>
<div class="t" style="left:442px;top:261px;font-size:12.25px">Flat_1.8s_Bin1_20251129-150058_0004.fit</div>
<div style="left:422px;top:279px;width:11px;height:11px;border-radius:50%;background:#383838"></div>
<div class="t" style="left:442px;top:278px;font-size:12.25px">Flat_1.8s_Bin1_20251129-150100_0005.fit</div>
<div style="left:422px;top:296px;width:11px;height:11px;border-radius:50%;background:#383838"></div>
<div class="t" style="left:442px;top:295px;font-size:12.25px">Flat_1.8s_Bin1_20251129-150103_0006.fit</div>
<div style="left:422px;top:313px;width:11px;height:11px;border-radius:50%;background:#383838"></div>
<div class="t" style="left:442px;top:312px;font-size:12.25px">Flat_1.8s_Bin1_20251129-150105_0007.fit</div>
<div style="left:422px;top:330px;width:11px;height:11px;border-radius:50%;background:#383838"></div>
<div class="t" style="left:442px;top:329px;font-size:12.25px">Flat_1.8s_Bin1_20251129-150108_0008.fit</div>
<div style="left:422px;top:347px;width:11px;height:11px;border-radius:50%;background:#383838"></div>
<div class="t" style="left:442px;top:346px;font-size:12.25px">Flat_1.8s_Bin1_20251129-150110_0009.fit</div>
<div style="left:422px;top:364px;width:11px;height:11px;border-radius:50%;background:#383838"></div>
<div class="t" style="left:442px;top:363px;font-size:12.25px">Flat_1.8s_Bin1_20251129-150113_0010.fit</div>
<div style="left:422px;top:381px;width:11px;height:11px;border-radius:50%;background:#383838"></div>
<div class="t" style="left:442px;top:380px;font-size:12.25px">Flat_1.8s_Bin1_20251129-150115_0011.fit</div>
<div style="left:422px;top:398px;width:11px;height:11px;border-radius:50%;background:#383838"></div>
<div class="t" style="left:442px;top:397px;font-size:12.25px">Flat_1.8s_Bin1_20251129-150118_0012.fit</div>
<div style="left:422px;top:415px;width:11px;height:11px;border-radius:50%;background:#383838"></div>
<div class="t" style="left:442px;top:414px;font-size:12.25px">Flat_1.8s_Bin1_20251129-150120_0013.fit</div>
<div style="left:422px;top:432px;width:11px;height:11px;border-radius:50%;background:#383838"></div>
<div class="t" style="left:442px;top:431px;font-size:12.25px">Flat_1.8s_Bin1_20251129-150123_0014.fit</div>
<div style="left:422px;top:449px;width:11px;height:11px;border-radius:50%;background:#383838"></div>
<div class="t" style="left:442px;top:448px;font-size:12.25px">Flat_1.8s_Bin1_20251129-150125_0015.fit</div>
<div style="left:422px;top:466px;width:11px;height:11px;border-radius:50%;background:#383838"></div>
<div class="t" style="left:442px;top:465px;font-size:12.25px">Flat_1.8s_Bin1_20251129-150128_0016.fit</div>
<div style="left:422px;top:483px;width:11px;height:11px;border-radius:50%;background:#383838"></div>
<div class="t" style="left:442px;top:482px;font-size:12.25px">Flat_1.8s_Bin1_20251129-150130_0017.fit</div>
<div style="left:422px;top:500px;width:11px;height:11px;border-radius:50%;background:#383838"></div>
<div class="t" style="left:442px;top:499px;font-size:12.25px">Flat_1.8s_Bin1_20251129-150133_0018.fit</div>
<div style="left:422px;top:517px;width:11px;height:11px;border-radius:50%;background:#383838"></div>
<div class="t" style="left:442px;top:516px;font-size:12.25px">Flat_1.8s_Bin1_20251129-150135_0019.fit</div>
<div style="left:422px;top:534px;width:11px;height:11px;border-radius:50%;background:#383838"></div>
<div class="t" style="left:442px;top:533px;font-size:12.25px">Flat_1.8s_Bin1_20251129-150138_0020.fit</div>
<div style="left:422px;top:551px;width:11px;height:11px;border-radius:50%;background:#383838"></div>
<div class="t" style="left:442px;top:550px;font-size:12.25px">Flat_1.8s_Bin1_20251129-150140_0021.fit</div>
<div style="left:422px;top:568px;width:11px;height:11px;border-radius:50%;background:#383838"></div>
<div class="t" style="left:442px;top:567px;font-size:12.25px">Flat_1.8s_Bin1_20251129-150143_0022.fit</div>
<div style="left:422px;top:585px;width:11px;height:11px;border-radius:50%;background:#383838"></div>
<div class="t" style="left:442px;top:584px;font-size:12.25px">Flat_1.8s_Bin1_20251129-150145_0023.fit</div>
<div style="left:422px;top:602px;width:11px;height:11px;border-radius:50%;background:#383838"></div>
<div class="t" style="left:442px;top:601px;font-size:12.25px">Flat_1.8s_Bin1_20251129-150148_0024.fit</div>
<div style="left:422px;top:619px;width:11px;height:11px;border-radius:50%;background:#383838"></div>
<div class="t" style="left:442px;top:618px;font-size:12.25px">Flat_1.8s_Bin1_20251129-150150_0025.fit</div>
<div style="left:422px;top:636px;width:11px;height:11px;border-radius:50%;background:#383838"></div>
<div class="t" style="left:442px;top:635px;font-size:12.25px">Flat_1.8s_Bin1_20251129-150152_0026.fit</div>
<div style="left:422px;top:653px;width:11px;height:11px;border-radius:50%;background:#383838"></div>
<div class="t" style="left:442px;top:652px;font-size:12.25px">Flat_1.8s_Bin1_20251129-150155_0027.fit</div>
<div style="left:422px;top:670px;width:11px;height:11px;border-radius:50%;background:#383838"></div>
<div class="t" style="left:442px;top:669px;font-size:12.25px">Flat_1.8s_Bin1_20251129-150157_0028.fit</div>
<div style="left:422px;top:687px;width:11px;height:11px;border-radius:50%;background:#383838"></div>
<div class="t" style="left:442px;top:686px;font-size:12.25px">Flat_1.8s_Bin1_20251129-150200_0029.fit</div>
<div style="left:422px;top:704px;width:11px;height:11px;border-radius:50%;background:#383838"></div>
<div class="t" style="left:442px;top:703px;font-size:12.25px">Flat_1.8s_Bin1_20251129-150202_0030.fit</div>
<div class="btn" style="left:916px;top:155px;width:97px;height:24px;line-height:22px;"><svg style="position:static;vertical-align:-1px;margin-right:3px" width="14" height="10" viewBox="0 0 14 10"><path d="M0 5L4.5 0H14v10H4.5z" fill="#5c5c5c"/><path d="M6.2 2.2l5 5.6M11.2 2.2l-5 5.6" stroke="#f4f4f4" stroke-width="2.3"/></svg><span>Clear</span></div>
<div class="btn" style="left:1019px;top:155px;width:148px;height:24px;line-height:22px;"><svg style="position:static;vertical-align:-1px;margin-right:3px" width="14" height="10" viewBox="0 0 14 10"><path d="M0 5L4.5 0H14v10H4.5z" fill="#5c5c5c"/><path d="M6.2 2.2l5 5.6M11.2 2.2l-5 5.6" stroke="#f4f4f4" stroke-width="2.3"/></svg><span>Remove Selected</span></div>
<div class="btn" style="left:1227px;top:155px;width:139px;height:24px;line-height:22px;"><svg style="position:static;vertical-align:-4px;margin-right:2px" width="16" height="16" viewBox="0 0 16 16"><rect x="1" y="1" width="5.5" height="5.5" fill="#fff" stroke="#1060c0" stroke-width="2"/><rect x="9.5" y="1" width="5.5" height="5.5" fill="#fff" stroke="#999"/><rect x="1" y="9.5" width="5.5" height="5.5" fill="#fff" stroke="#999"/><rect x="9.5" y="9.5" width="5.5" height="5.5" fill="#fff" stroke="#1060c0" stroke-width="2"/></svg><span>Invert Selection</span></div>
<div class="grp" style="left:916px;top:477px;width:450px;height:407px"><div class="gh" style="height:27px"></div><div class="gt" style="left:6px;top:6px;font-size:12.25px">Image Integration</div><svg style="left:422px;top:5px" width="17" height="17" viewBox="0 0 17 17"><path d="M5.2 3.6A6.3 6.3 0 1 0 11.8 3.9" fill="none" stroke="#444" stroke-width="2.2"/><path d="M9 0.3L16 1.2 10.4 7.2z" fill="#444"/></svg></div>
<div class="t" style="left:782px;top:521px;width:300px;text-align:right;font-size:12.5px;">Combination:</div>
<div class="combo" style="left:1087px;top:518px;width:95px;height:20px;line-height:18px;font-size:12.5px">Average</div><div style="left:1163px;top:520px;width:1px;height:16px;background:#a0a0a0"></div><svg style="left:1167px;top:524px" width="11" height="7"><path d="M0 0h11l-5.5 6.5z" fill="#1a1a1a"/></svg>
<div class="t" style="left:782px;top:547px;width:300px;text-align:right;font-size:12.5px;">Rejection algorithm:</div>
<div class="combo" style="left:1087px;top:544px;width:274px;height:20px;line-height:18px;font-size:12.5px">Auto</div><div style="left:1342px;top:546px;width:1px;height:16px;background:#a0a0a0"></div><svg style="left:1346px;top:550px" width="11" height="7"><path d="M0 0h11l-5.5 6.5z" fill="#1a1a1a"/></svg>
<div class="t" style="left:782px;top:573px;width:300px;text-align:right;font-size:12.5px;">Percentile low:</div>
<div class="edit" style="left:1087px;top:570px;width:42px;height:20px;font-size:12.5px;line-height:18px">0.20</div>
<div style="left:1133px;top:577px;width:227px;height:5px;border:1px solid #9a9a9a;border-radius:2px;background:#ececec"></div>
<div style="left:1134px;top:578px;width:47px;height:3px;background:#9c9c9c"></div>
<div style="left:1176px;top:574px;width:11px;height:11px;border-radius:50%;border:1px solid #8a8a8a;background:radial-gradient(circle at 50% 35%,#fafafa,#d2d2d2)"></div>
<div class="t" style="left:782px;top:599px;width:300px;text-align:right;font-size:12.5px;">Percentile high:</div>
<div class="edit" style="left:1087px;top:596px;width:42px;height:20px;font-size:12.5px;line-height:18px">0.10</div>
<div style="left:1133px;top:603px;width:227px;height:5px;border:1px solid #9a9a9a;border-radius:2px;background:#ececec"></div>
<div style="left:1134px;top:604px;width:26px;height:3px;background:#9c9c9c"></div>
<div style="left:1155px;top:600px;width:11px;height:11px;border-radius:50%;border:1px solid #8a8a8a;background:radial-gradient(circle at 50% 35%,#fafafa,#d2d2d2)"></div>
<div class="t" style="left:782px;top:625px;width:300px;text-align:right;font-size:12.5px;">Sigma low:</div>
<div class="edit" style="left:1087px;top:622px;width:42px;height:20px;font-size:12.5px;line-height:18px">4.00</div>
<div style="left:1133px;top:629px;width:227px;height:5px;border:1px solid #9a9a9a;border-radius:2px;background:#ececec"></div>
<div style="left:1134px;top:630px;width:90px;height:3px;background:#9c9c9c"></div>
<div style="left:1219px;top:626px;width:11px;height:11px;border-radius:50%;border:1px solid #8a8a8a;background:radial-gradient(circle at 50% 35%,#fafafa,#d2d2d2)"></div>
<div class="t" style="left:782px;top:651px;width:300px;text-align:right;font-size:12.5px;">Sigma high:</div>
<div class="edit" style="left:1087px;top:648px;width:42px;height:20px;font-size:12.5px;line-height:18px">3.00</div>
<div style="left:1133px;top:655px;width:227px;height:5px;border:1px solid #9a9a9a;border-radius:2px;background:#ececec"></div>
<div style="left:1134px;top:656px;width:69px;height:3px;background:#9c9c9c"></div>
<div style="left:1198px;top:652px;width:11px;height:11px;border-radius:50%;border:1px solid #8a8a8a;background:radial-gradient(circle at 50% 35%,#fafafa,#d2d2d2)"></div>
<div class="t" style="left:782px;top:677px;width:300px;text-align:right;font-size:12.5px;">Linear fit low:</div>
<div class="edit" style="left:1087px;top:674px;width:42px;height:20px;font-size:12.5px;line-height:18px">5.00</div>
<div style="left:1133px;top:681px;width:227px;height:5px;border:1px solid #9a9a9a;border-radius:2px;background:#ececec"></div>
<div style="left:1134px;top:682px;width:112px;height:3px;background:#9c9c9c"></div>
<div style="left:1241px;top:678px;width:11px;height:11px;border-radius:50%;border:1px solid #8a8a8a;background:radial-gradient(circle at 50% 35%,#fafafa,#d2d2d2)"></div>
<div class="t" style="left:782px;top:703px;width:300px;text-align:right;font-size:12.5px;">Linear fit high:</div>
<div class="edit" style="left:1087px;top:700px;width:42px;height:20px;font-size:12.5px;line-height:18px">3.50</div>
<div style="left:1133px;top:707px;width:227px;height:5px;border:1px solid #9a9a9a;border-radius:2px;background:#ececec"></div>
<div style="left:1134px;top:708px;width:80px;height:3px;background:#9c9c9c"></div>
<div style="left:1209px;top:704px;width:11px;height:11px;border-radius:50%;border:1px solid #8a8a8a;background:radial-gradient(circle at 50% 35%,#fafafa,#d2d2d2)"></div>
<div class="t" style="left:782px;top:729px;width:300px;text-align:right;font-size:12.5px;">ESD outliers:</div>
<div class="edit" style="left:1087px;top:726px;width:42px;height:20px;font-size:12.5px;line-height:18px">0.30</div>
<div style="left:1133px;top:733px;width:227px;height:5px;border:1px solid #9a9a9a;border-radius:2px;background:#ececec"></div>
<div style="left:1134px;top:734px;width:69px;height:3px;background:#9c9c9c"></div>
<div style="left:1198px;top:730px;width:11px;height:11px;border-radius:50%;border:1px solid #8a8a8a;background:radial-gradient(circle at 50% 35%,#fafafa,#d2d2d2)"></div>
<div class="t" style="left:782px;top:755px;width:300px;text-align:right;font-size:12.5px;">ESD significance:</div>
<div class="edit" style="left:1087px;top:752px;width:42px;height:20px;font-size:12.5px;line-height:18px">0.05</div>
<div style="left:1133px;top:759px;width:227px;height:5px;border:1px solid #9a9a9a;border-radius:2px;background:#ececec"></div>
<div style="left:1134px;top:760px;width:15px;height:3px;background:#9c9c9c"></div>
<div style="left:1144px;top:756px;width:11px;height:11px;border-radius:50%;border:1px solid #8a8a8a;background:radial-gradient(circle at 50% 35%,#fafafa,#d2d2d2)"></div>
<div class="t" style="left:782px;top:781px;width:300px;text-align:right;font-size:12.5px;">RCR limit:</div>
<div class="edit" style="left:1087px;top:778px;width:42px;height:20px;font-size:12.5px;line-height:18px">0.10</div>
<div style="left:1133px;top:785px;width:227px;height:5px;border:1px solid #9a9a9a;border-radius:2px;background:#ececec"></div>
<div style="left:1134px;top:786px;width:26px;height:3px;background:#9c9c9c"></div>
<div style="left:1155px;top:782px;width:11px;height:11px;border-radius:50%;border:1px solid #8a8a8a;background:radial-gradient(circle at 50% 35%,#fafafa,#d2d2d2)"></div>
<div class="cb" style="left:1087px;top:804px;width:13px;height:13px"></div>
<div class="t" style="left:1106px;top:804px;font-size:12.5px">Large-scale pixel rejection</div>
<div class="t" style="left:782px;top:829px;width:300px;text-align:right;font-size:12.5px;">Large-scale layers:</div>
<div style="left:1087px;top:825px;width:58px;height:23px;border:1px solid #9a9a9a;background:#d8d8da"></div>
<div class="t" style="left:1094px;top:829px;font-size:12.5px;color:#a0a0a0">2</div>
<div style="left:1131px;top:826px;width:1px;height:21px;background:#c8c8c8"></div>
<svg style="left:1133px;top:828px" width="10" height="17"><path d="M1 5l4-4 4 4z" fill="#9a9a9a"/><path d="M1 12l4 4 4-4z" fill="#9a9a9a"/></svg>
<div class="t" style="left:782px;top:859px;width:300px;text-align:right;font-size:12.5px;">Large-scale growth:</div>
<div style="left:1087px;top:855px;width:58px;height:23px;border:1px solid #9a9a9a;background:#d8d8da"></div>
<div class="t" style="left:1094px;top:859px;font-size:12.5px;color:#a0a0a0">2</div>
<div style="left:1131px;top:856px;width:1px;height:21px;background:#c8c8c8"></div>
<svg style="left:1133px;top:858px" width="10" height="17"><path d="M1 5l4-4 4 4z" fill="#9a9a9a"/><path d="M1 12l4 4 4-4z" fill="#9a9a9a"/></svg>
<div class="t" style="left:1391px;top:126px;font-size:13px;font-weight:bold;line-height:13px;color:#111">A script to preprocess, register,<br>and integrate images.</div>
<div class="t" style="left:1391px;top:168px;font-size:9px;line-height:10px;color:#222">Copyright © 2019-2025 Roberto Sartori<br>Copyright © 2020-2021 Adam Block<br>Copyright © 2019 Tommaso Rubechi<br>Copyright © 2012 Kai Wiechen<br>Copyright © 2012-2025 Pleiades Astrophoto</div>
<svg style="left:1389px;top:242px" width="17" height="17" viewBox="0 0 17 17"><path d="M1 1h15v11H6l-3 3v-3H1z" fill="#fff" stroke="#333" stroke-width="1"/><path d="M4 4h9M4 6.5h9M4 9h7" stroke="#2a6ac8" stroke-width="1.2"/></svg>
<div class="grp" style="left:1387px;top:268px;width:215px;height:90px"><div class="gh" style="height:17px"></div><div class="gt" style="left:6px;top:1px;font-size:12.25px">Presets</div></div>
<div class="t" style="left:1393px;top:300px;font-size:12px;line-height:13px">Configure WBPP for maximum speed<br>or quality.</div>
<div class="btn" style="left:1393px;top:331px;width:203px;height:21px;line-height:19px;font-size:12px"><span>SELECT</span></div>
<div class="grp" style="left:1387px;top:366px;width:215px;height:163px"><div class="gh" style="height:25px"></div><div class="gt" style="left:34px;top:5px;font-size:12.25px">Grouping Keywords</div><div class="cb" style="left:8px;top:4px;width:13px;height:13px"><svg style="left:1px;top:1px" width="10" height="10"><path d="M1 5l3 3 5-7" stroke="#111" stroke-width="1.8" fill="none"/></svg></div></div>
<div class="edit" style="left:1393px;top:405px;width:179px;height:20px"></div>
<svg style="left:1579px;top:408px" width="14" height="14"><path d="M7 0v14M0 7h14" stroke="#34a86a" stroke-width="3.2"/></svg>
<div style="left:1394px;top:438px;width:177px;height:78px;border:1px solid #8a8a8a;background:#fff"></div>
<div style="left:1395px;top:482px;width:175px;height:17px;background:#eef3fd"></div>
<div style="left:1395px;top:439px;width:175px;height:26px;background:linear-gradient(#f7f7f7,#e6e6e6 50%,#cfcfcf);border-bottom:1px solid #8f8f8f"></div>
<div style="left:1467px;top:439px;width:1px;height:26px;background:#9a9a9a"></div>
<div style="left:1506px;top:439px;width:1px;height:26px;background:#9a9a9a"></div>
<div class="t" style="left:1395px;top:445px;width:72px;text-align:center;font-size:12.5px">Keyword</div>
<div class="t" style="left:1468px;top:445px;width:37px;text-align:center;font-size:12.5px">Pre</div>
<div class="t" style="left:1506px;top:445px;width:64px;text-align:center;font-size:12.5px">Post</div>
<svg style="left:1579px;top:433px" width="14" height="17"><path d="M7 16V4" stroke="#8e8e8e" stroke-width="3"/><path d="M0.8 8.5L7 2.2l6.2 6.3" stroke="#8e8e8e" stroke-width="2.8" fill="none"/></svg>
<svg style="left:1579px;top:457px" width="14" height="17"><path d="M7 1v12" stroke="#8e8e8e" stroke-width="3"/><path d="M0.8 8.5L7 14.8l6.2-6.3" stroke="#8e8e8e" stroke-width="2.8" fill="none"/></svg>
<svg style="left:1578px;top:480px" width="17" height="17" viewBox="0 0 17 17"><circle cx="6.5" cy="10.5" r="3.6" fill="none" stroke="#a0a0a0" stroke-width="3" stroke-dasharray="1.6 1.2"/><circle cx="6.5" cy="10.5" r="2.6" fill="none" stroke="#a0a0a0" stroke-width="1.8"/><circle cx="12" cy="5" r="2.8" fill="none" stroke="#a0a0a0" stroke-width="2.4" stroke-dasharray="1.3 1"/><circle cx="12" cy="5" r="2" fill="none" stroke="#a0a0a0" stroke-width="1.4"/></svg>
<svg style="left:1579px;top:505px" width="14" height="16" viewBox="0 0 14 16"><path d="M0 2.5h14" stroke="#8a8a8a" stroke-width="1.6"/><path d="M5 2V0.5h4V2" stroke="#8a8a8a" stroke-width="1.2" fill="none"/><path d="M1.5 4.5h11v11h-11z" fill="#8a8a8a"/><path d="M4.3 6.5v7M7 6.5v7M9.7 6.5v7" stroke="#dcdcde" stroke-width="1.2"/></svg>
<div class="grp" style="left:1387px;top:537px;width:215px;height:205px"><div class="gh" style="height:17px"></div><div class="gt" style="left:6px;top:1px;font-size:12.25px">Global Options</div></div>
<div class="t" style="left:1393px;top:571px;font-size:12.5px">FITS orientation:</div>
<div class="combo" style="left:1494px;top:568px;width:102px;height:20px;line-height:18px;font-size:12.5px">Global Pref</div><div style="left:1578px;top:570px;width:1px;height:16px;background:#a0a0a0"></div><svg style="left:1581px;top:574px" width="11" height="7"><path d="M0 0h11l-5.5 6.5z" fill="#1a1a1a"/></svg>
<div class="cb" style="left:1393px;top:594px;width:13px;height:13px"></div>
<div class="t" style="left:1412px;top:594px;font-size:12.5px">Compact GUI</div>
<div class="cb" style="left:1393px;top:614px;width:13px;height:13px"><svg style="left:1px;top:1px" width="10" height="10"><path d="M1 5l3 3 5-7" stroke="#111" stroke-width="1.8" fill="none"/></svg></div>
<div class="t" style="left:1412px;top:614px;font-size:12.5px">Detect masters from path</div>
<div class="cb" style="left:1393px;top:634px;width:13px;height:13px"><svg style="left:1px;top:1px" width="10" height="10"><path d="M1 5l3 3 5-7" stroke="#111" stroke-width="1.8" fill="none"/></svg></div>
<div class="t" style="left:1412px;top:634px;font-size:12.5px">Generate rejection maps</div>
<div class="cb" style="left:1393px;top:654px;width:13px;height:13px"></div>
<div class="t" style="left:1412px;top:654px;font-size:12.5px">Preserve white balance</div>
<div class="cb" style="left:1393px;top:674px;width:13px;height:13px"><svg style="left:1px;top:1px" width="10" height="10"><path d="M1 5l3 3 5-7" stroke="#111" stroke-width="1.8" fill="none"/></svg></div>
<div class="t" style="left:1412px;top:674px;font-size:12.5px">Save groups on exit</div>
<div class="cb" style="left:1393px;top:694px;width:13px;height:13px"></div>
<div class="t" style="left:1412px;top:694px;font-size:12.5px">Smart naming override</div>
<div class="btn" style="left:1393px;top:714px;width:203px;height:21px;line-height:19px;font-size:12.5px"><span>Purge cache (4.33 MiB)</span></div>
<div class="grp" style="left:1387px;top:749px;width:215px;height:83px"><div class="gh" style="height:17px"></div><div class="gt" style="left:6px;top:1px;font-size:12.25px">Registration Reference Image</div></div>
<div class="t" style="left:1393px;top:783px;font-size:12.5px">Mode:</div>
<div class="combo" style="left:1433px;top:780px;width:141px;height:20px;line-height:18px;font-size:12.5px">auto</div><div style="left:1556px;top:782px;width:1px;height:16px;background:#a0a0a0"></div><svg style="left:1559px;top:786px" width="11" height="7"><path d="M0 0h11l-5.5 6.5z" fill="#1a1a1a"/></svg>
<div class="edit" style="left:1393px;top:806px;width:181px;height:20px;background:#d9d9db;color:#9a9a9a;font-size:12.5px">auto</div>
<svg style="left:1581px;top:811px" width="11" height="10" viewBox="0 0 11 10"><path d="M0 1h4l1 1.5h6V10H0z" fill="#a0a0a0"/><path d="M0 3.5h11" stroke="#dfdfe1" stroke-width="0.8"/></svg>
<div class="grp" style="left:1387px;top:840px;width:215px;height:58px"><div class="gh" style="height:17px"></div><div class="gt" style="left:6px;top:1px;font-size:12.25px">Output Directory</div></div>
<div class="edit" style="left:1393px;top:871px;width:181px;height:21px;font-size:12.5px;padding-left:2px;overflow:hidden"><span style="position:relative;left:-5px">5/Canon-70-200-M45/Processat</span></div>
<svg style="left:1581px;top:876px" width="11" height="10" viewBox="0 0 11 10"><path d="M0 1h4l1 1.5h6V10H0z" fill="#555"/><path d="M0 3.5h11" stroke="#dfdfe1" stroke-width="0.8"/></svg>
<svg style="left:325px;top:912px" width="12" height="12"><path d="M0 0L11 11H0z" fill="#1060c8"/></svg>
<div class="btn" style="left:348px;top:905px;width:103px;height:24px;line-height:22px;font-size:12.5px"><svg style="position:static;vertical-align:-2px;margin-right:3px" width="14" height="14"><path d="M7 0v14M0 7h14" stroke="#34a86a" stroke-width="3.2"/></svg><span>Directory</span></div>
<div class="btn" style="left:457px;top:905px;width:97px;height:24px;line-height:22px;font-size:12.5px"><svg style="position:static;vertical-align:-2px;margin-right:3px" width="14" height="14"><path d="M7 0v14M0 7h14" stroke="#34a86a" stroke-width="3.2"/></svg><span>Files</span></div>
<div class="btn" style="left:560px;top:905px;width:97px;height:24px;line-height:22px;font-size:12.5px"><svg style="position:static;vertical-align:-2px;margin-right:3px" width="14" height="14"><path d="M7 0v14M0 7h14" stroke="#34a86a" stroke-width="3.2"/></svg><span>Bias</span></div>
<div class="btn" style="left:663px;top:905px;width:97px;height:24px;line-height:22px;font-size:12.5px"><svg style="position:static;vertical-align:-2px;margin-right:3px" width="14" height="14"><path d="M7 0v14M0 7h14" stroke="#34a86a" stroke-width="3.2"/></svg><span>Darks</span></div>
<div class="btn" style="left:766px;top:905px;width:97px;height:24px;line-height:22px;font-size:12.5px"><svg style="position:static;vertical-align:-2px;margin-right:3px" width="14" height="14"><path d="M7 0v14M0 7h14" stroke="#34a86a" stroke-width="3.2"/></svg><span>Flats</span></div>
<div class="btn" style="left:869px;top:905px;width:97px;height:24px;line-height:22px;font-size:12.5px;border:2px solid #84b0f4;line-height:21px"><svg style="position:static;vertical-align:-2px;margin-right:3px" width="14" height="14"><path d="M7 0v14M0 7h14" stroke="#34a86a" stroke-width="3.2"/></svg><span>Lights</span></div>
<div class="btn" style="left:972px;top:905px;width:119px;height:24px;line-height:22px;font-size:12.5px"><svg style="position:static;vertical-align:-4px;margin-right:2px" width="16" height="16" viewBox="0 0 16 16"><path d="M2 1h7l3 3v11H2z" fill="#fff" stroke="#333" stroke-width="1"/><path d="M5 15l1.5-4 6-6 2 2-6 6z" fill="#1a5ac8"/></svg><span>Add Custom</span></div>
<div class="btn" style="left:1137px;top:905px;width:97px;height:24px;line-height:22px;font-size:12.5px"><svg style="position:static;vertical-align:-4px;margin-right:1px" width="17" height="17" viewBox="0 0 17 17"><path d="M5.2 3.6A6.3 6.3 0 1 0 11.8 3.9" fill="none" stroke="#444" stroke-width="2.2"/><path d="M9 0.3L16 1.2 10.4 7.2z" fill="#444"/></svg><span>Reset</span></div>
<div class="btn" style="left:1280px;top:905px;width:116px;height:24px;line-height:22px;font-size:12.5px"><svg style="position:static;vertical-align:-4px;margin-right:2px" width="17" height="17" viewBox="0 0 17 17"><circle cx="8.5" cy="8.5" r="6.2" fill="none" stroke="#3a3a3a" stroke-width="3.4" stroke-dasharray="2.6 2.27"/><circle cx="8.5" cy="8.5" r="4.6" fill="none" stroke="#3a3a3a" stroke-width="3"/></svg><span>Diagnostics</span></div>
<div class="btn" style="left:1402px;top:905px;width:97px;height:24px;line-height:22px;font-size:12.5px"><svg style="position:static;vertical-align:-4px;margin-right:3px" width="16" height="17" viewBox="0 0 16 17"><path d="M4.3 4.2a6.3 6.3 0 1 0 7.4 0" stroke="#3a3a3a" stroke-width="2.4" fill="none"/><path d="M8 1v7.5" stroke="#3a3a3a" stroke-width="2.6"/></svg><span>Run</span></div>
<div class="btn" style="left:1505px;top:905px;width:97px;height:24px;line-height:22px;font-size:12.5px"><svg style="position:static;vertical-align:-3px;margin-right:3px" width="14" height="14"><rect width="14" height="14" rx="2" fill="#d8412a"/><path d="M4 4l6 6M10 4l-6 6" stroke="#fff" stroke-width="1.8"/></svg><span>Exit</span></div>
<svg style="left:1600px;top:926px" width="11" height="12"><rect x="9" y="1" width="1.6" height="1.6" fill="#6a6a6a"/><rect x="7" y="4" width="1.6" height="1.6" fill="#6a6a6a"/><rect x="5" y="6" width="1.6" height="1.6" fill="#6a6a6a"/><rect x="9" y="6" width="1.6" height="1.6" fill="#6a6a6a"/><rect x="3" y="8" width="1.6" height="1.6" fill="#6a6a6a"/><rect x="7" y="8" width="1.6" height="1.6" fill="#6a6a6a"/><rect x="1" y="10" width="1.6" height="1.6" fill="#6a6a6a"/><rect x="5" y="10" width="1.6" height="1.6" fill="#6a6a6a"/><rect x="9" y="10" width="1.6" height="1.6" fill="#6a6a6a"/></svg></body></html>
